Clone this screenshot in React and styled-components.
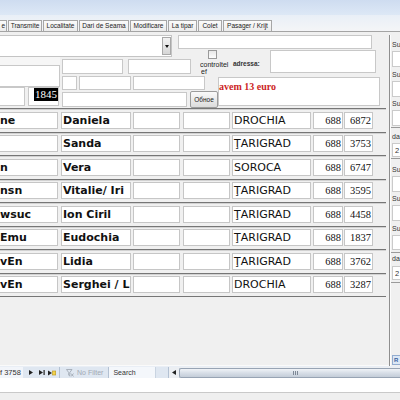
import React from 'react';
import styled, { createGlobalStyle } from 'styled-components';

const Global = createGlobalStyle`
  html, body { margin: 0; padding: 0; background: #f0f0f0; }
  body { width: 400px; height: 400px; overflow: hidden; font-family: "DejaVu Sans", sans-serif; }
`;

const Screen = styled.div`
  width: 400px; height: 400px; display: flex; flex-direction: column;
  overflow: hidden; background: #f0f0f0;
`;

const TitleBand = styled.div`
  height: 15px; flex-shrink: 0;
  background: linear-gradient(#cedcf0, #dde8f6);
`;

const TabStrip = styled.div`
  height: 17px; flex-shrink: 0; box-sizing: border-box;
  display: flex; align-items: flex-end; gap: 1px;
  background: linear-gradient(#e9eff7, #f4f5f7);
  border-bottom: 1px solid #a4a4a4;
`;

const Tab = styled.div`
  width: ${p => p.$w}px; height: 11px; box-sizing: border-box; flex-shrink: 0;
  border: 1px solid #a6a6a6; border-bottom: none;
  border-left-width: ${p => (p.$cut ? 0 : 1)}px;
  background: linear-gradient(#fbfbfb, #ececec);
  font: 6.5px/10px "Liberation Sans", sans-serif; color: #222;
  text-align: ${p => (p.$cut ? 'right' : 'center')};
  padding-right: ${p => (p.$cut ? 1 : 0)}px;
  white-space: nowrap; overflow: hidden;
`;

const Main = styled.div`
  height: 334px; flex-shrink: 0; display: flex;
`;

const FormPane = styled.div`
  width: 389px; flex-shrink: 0; display: flex; flex-direction: column;
`;

const Header = styled.div`
  height: 76px; flex-shrink: 0; box-sizing: border-box; padding-top: 3px;
  display: flex; align-items: flex-start;
`;

const LeftPart = styled.div`
  width: 178px; flex-shrink: 0; display: flex; flex-direction: column;
`;

const Combo = styled.div`
  width: 172px; height: 22px; box-sizing: border-box; background: #fff;
  border: 1px solid #c4c4c4; border-left: none;
  display: flex; justify-content: flex-end; align-items: center;
`;

const ComboBtn = styled.div`
  width: 9px; height: 18px; box-sizing: border-box;
  border: 1px solid #a9a9a9; background: linear-gradient(#f3f3f3, #d6d6d6);
  display: flex; align-items: center; justify-content: center;
`;

const Lower = styled.div`
  display: flex; align-items: flex-start;
`;

const LeftCol = styled.div`
  width: 60px; flex-shrink: 0; display: flex; flex-direction: column;
`;

const Strip = styled.div`
  height: 8px; background: #f6f6f6;
`;

const MidCol = styled.div`
  margin-left: 2px; display: flex; flex-direction: column;
`;

const FieldRow = styled.div`
  display: flex; align-items: flex-start; margin-top: ${p => p.$mt || 0}px;
`;

const Field = styled.div`
  flex-shrink: 0; box-sizing: border-box;
  width: ${p => p.$w}px; height: ${p => p.$h}px;
  margin-left: ${p => p.$ml || 0}px; margin-top: ${p => p.$mt || 0}px;
  background: #fff; border: 1px solid #c8c8c8;
  border-left-width: ${p => (p.$open ? 0 : 1)}px;
  display: flex; justify-content: flex-end; align-items: flex-start;
`;

const Selected = styled.span`
  background: #000; color: #fff; padding: 0 1px;
  font: 11px/13px "Liberation Serif", serif;
`;

const SmallButton = styled.div`
  flex-shrink: 0; width: 28px; height: 17px; margin-left: 3px; box-sizing: border-box;
  border: 1px solid #9c9c9c; border-radius: 2px;
  background: linear-gradient(#fafafa, #dcdcdc);
  font: 6.5px/15px "Liberation Sans", sans-serif; color: #222; text-align: center;
  white-space: nowrap; overflow: hidden;
`;

const RightPart = styled.div`
  width: 198px; flex-shrink: 0; display: flex; flex-direction: column;
`;

const InfoRow = styled.div`
  display: flex; align-items: flex-start; margin-top: 1px; height: 23px;
`;

const CheckCol = styled.div`
  width: 33px; margin-left: 22px; flex-shrink: 0; display: flex; flex-direction: column;
`;

const Check = styled.div`
  width: 9px; height: 9px; margin-left: 8px; box-sizing: border-box;
  border: 1px solid #9a9a9a; background: linear-gradient(#e8e8e8, #fdfdfd);
`;

const TinyText = styled.div`
  font: 7px/${p => p.$lh || 8}px "Liberation Sans", sans-serif; color: #222;
  margin-top: ${p => p.$mt || 0}px; margin-left: ${p => p.$ml || 0}px;
  height: ${p => p.$h || 'auto'}; overflow: hidden; white-space: nowrap;
`;

const AddrLabel = styled.div`
  width: 37px; flex-shrink: 0; margin-top: 10px;
  font: bold 6.5px/8px "Liberation Sans", sans-serif; color: #333;
`;

const Memo = styled.div`
  width: 162px; height: 29px; margin-left: 40px; margin-top: 4px; box-sizing: border-box;
  background: #fff; border: 1px solid #c8c8c8; padding: 3px 0 0 0;
  flex-shrink: 0;
`;

const Alert = styled.div`
  font: bold 10px/11px "Liberation Serif", serif; color: #cc1f26;
`;

const Rows = styled.div`
  width: 386px; border-top: 1px solid #767676; display: flex; flex-direction: column;
`;

const Row = styled.div`
  height: 23.5px; flex-shrink: 0; box-sizing: border-box;
  border-bottom: 1px solid #767676; box-shadow: inset 0 1px 0 #d2d2d2;
  display: flex; align-items: center;
`;

const Cell = styled.div`
  flex-shrink: 0; box-sizing: border-box;
  width: ${p => p.$w}px; height: 17px; margin-left: ${p => p.$ml || 0}px;
  background: #fff; border: 1px solid #c6c6c6;
  border-left-width: ${p => (p.$open ? 0 : 1)}px;
  padding: 0 1px; overflow: hidden; white-space: nowrap;
  color: #111;
  font-family: ${p => (p.$num ? '"Liberation Serif", serif' : '"DejaVu Sans", sans-serif')};
  font-size: ${p => (p.$num ? 10.5 : 11)}px;
  font-weight: ${p => (p.$bold ? 'bold' : 'normal')};
  line-height: 15px;
  text-align: ${p => (p.$num ? 'right' : 'left')};
  padding-left: ${p => (p.$open ? 0 : 1)}px;
`;

const Filler = styled.div`
  flex: 1; border-bottom: 1px solid #fafafa;
`;

const Divider = styled.div`
  width: 2px; flex-shrink: 0; margin-top: 3px;
  border-left: 1px solid #8e8e8e; box-sizing: border-box; background: #fcfcfc;
`;

const SidePanel = styled.div`
  flex: 1; display: flex; flex-direction: column; margin-top: 3px; overflow: hidden;
`;

const SideLabel = styled.div`
  height: 12px; margin-top: ${p => p.$mt || 0}px; flex-shrink: 0;
  font: 7px/12px "Liberation Sans", sans-serif; color: #333; white-space: nowrap; padding-left: 1px;
`;

const SideBox = styled.div`
  height: ${p => p.$h || 16}px; margin-top: ${p => p.$mt || 0}px; margin-left: 1px; flex-shrink: 0;
  box-sizing: border-box; background: #fff; border: 1px solid #cacaca; border-right: none;
  font: 7.5px/13px "Liberation Sans", sans-serif; color: #333; padding-left: 2px;
`;

const SideSep = styled.div`
  height: 1px; margin-top: ${p => p.$mt || 0}px; background: #9a9a9a; flex-shrink: 0;
`;

const RBox = styled.div`
  margin-top: auto; margin-bottom: 1px; margin-left: 1px; height: 10px; box-sizing: border-box;
  border: 1px solid #93acd0; border-right: none; background: #dbe7f5;
  font: bold 6px/8px "Liberation Sans", sans-serif; color: #3b5f9e; padding-left: 1px;
`;

const NavBar = styled.div`
  height: 12px; flex-shrink: 0; display: flex; align-items: stretch;
  background: #dfe7f1; border-top: 1px solid #e9eef5; box-sizing: border-box;
`;

const RecordBox = styled.div`
  width: 23px; flex-shrink: 0; background: #f2f5fa;
  font: 7.5px/11px "Liberation Sans", sans-serif; color: #333; white-space: nowrap; overflow: hidden;
`;

const NavIcon = styled.div`
  flex-shrink: 0; margin-left: ${p => p.$ml}px; display: flex; align-items: center;
`;

const NavSep = styled.div`
  width: 1px; flex-shrink: 0; margin-left: ${p => p.$ml || 0}px; background: #b3c1d3;
`;

const FilterText = styled.div`
  margin-left: 3px; flex-shrink: 0;
  font: 7px/11px "Liberation Sans", sans-serif; color: #a2a9b3; white-space: nowrap;
`;

const SearchBox = styled.div`
  width: 47px; flex-shrink: 0; box-sizing: border-box; background: #f4f7fb;
  border-right: 1px solid #c9d4e1; padding-left: 4px;
  font: 7px/11px "Liberation Sans", sans-serif; color: #333;
`;

const NavGap = styled.div`
  width: 12px; flex-shrink: 0;
`;

const ScrollArea = styled.div`
  flex: 1; display: flex; align-items: center; background: #eceff3;
`;

const Thumb = styled.div`
  flex: 1; height: 10px; margin-left: 3px; box-sizing: border-box;
  border: 1px solid #98a4b4; border-right: none; border-radius: 2px 0 0 2px;
  background: linear-gradient(#f0f3f7, #d7dee7 50%, #c4cdd8);
  display: flex; align-items: center; justify-content: flex-start; padding-left: 113px;
`;

const Grip = styled.div`
  width: 5px; height: 4px;
  background: repeating-linear-gradient(90deg, #7d8896 0 1px, transparent 1px 2px);
`;

const WhiteBand = styled.div`
  height: 14px; flex-shrink: 0; background: #fff;
`;

const StatusBar = styled.div`
  height: 8px; flex-shrink: 0; background: #efefef; border-top: 1px solid #c9c9c9; box-sizing: border-box;
`;

const tabs = [
  { t: 'e', w: 7, cut: true },
  { t: 'Transmite', w: 34 },
  { t: 'Localitate', w: 35 },
  { t: 'Dari de Seama', w: 50 },
  { t: 'Modificare', w: 37 },
  { t: 'La tipar', w: 29 },
  { t: 'Colet', w: 24 },
  { t: 'Pasager / Krijt', w: 49 },
];

const rows = [
  ['ne', 'Daniela', 'DROCHIA', '688', '6872'],
  ['', 'Sanda', 'ŢARIGRAD', '688', '3753'],
  ['n', 'Vera', 'SOROCA', '688', '6747'],
  ['nsn', 'Vitalie/ Iri', 'ŢARIGRAD', '688', '3595'],
  ['wsuc', 'Ion Ciril', 'ŢARIGRAD', '688', '4458'],
  ['Emu', 'Eudochia', 'ŢARIGRAD', '688', '1837'],
  ['vEn', 'Lidia', 'ŢARIGRAD', '688', '3762'],
  ['vEn', 'Serghei / L', 'DROCHIA', '688', '3287'],
];

const side = [
  { k: 'label', t: 'Su', mt: 4 },
  { k: 'box', h: 16 },
  { k: 'label', t: 'Su', mt: 2 },
  { k: 'box', h: 16 },
  { k: 'label', t: 'Su', mt: 1 },
  { k: 'box', h: 16 },
  { k: 'sep', mt: 1 },
  { k: 'label', t: 'da', mt: 3 },
  { k: 'box', h: 14, t: '2' },
  { k: 'sep', mt: 1 },
  { k: 'label', t: 'Su', mt: 5 },
  { k: 'box', h: 16 },
  { k: 'label', t: 'Su', mt: 1 },
  { k: 'box', h: 16 },
  { k: 'label', t: 'Su', mt: 2 },
  { k: 'box', h: 15 },
  { k: 'sep', mt: 2 },
  { k: 'label', t: 'da', mt: 0 },
  { k: 'box', h: 14, t: '2', mt: 1 },
  { k: 'sep', mt: 2 },
];

const Tri = ({ left }) => (
  <svg width="4" height="5" viewBox="0 0 4 5">
    <polygon points={left ? '4,0 0,2.5 4,5' : '0,0 4,2.5 0,5'} fill="#222" />
  </svg>
);

export default function App() {
  return (
    <>
      <Global />
      <Screen>
        <TitleBand />
        <TabStrip>
          {tabs.map(t => (
            <Tab key={t.t} $w={t.w} $cut={t.cut}>{t.t}</Tab>
          ))}
        </TabStrip>
        <Main>
          <FormPane>
            <Header>
              <LeftPart>
                <Combo>
                  <ComboBtn>
                    <svg width="4" height="3" viewBox="0 0 4 3"><polygon points="0,0 4,0 2,3" fill="#111" /></svg>
                  </ComboBtn>
                </Combo>
                <Lower>
                  <LeftCol>
                    <Strip />
                    <Field $w={60} $h={22} $open />
                    <FieldRow>
                      <Field $w={25} $h={19} $open />
                      <Field $w={31} $h={19} $ml={3}><Selected>1845</Selected></Field>
                    </FieldRow>
                  </LeftCol>
                  <MidCol>
                    <FieldRow $mt={2}>
                      <Field $w={61} $h={15} />
                      <Field $w={63} $h={15} $ml={5} />
                    </FieldRow>
                    <FieldRow $mt={2}>
                      <Field $w={15} $h={14} />
                      <Field $w={52} $h={14} $ml={2} />
                      <Field $w={72} $h={14} $ml={2} />
                    </FieldRow>
                    <FieldRow $mt={1}>
                      <Field $w={125} $h={15} $mt={1} />
                      <SmallButton>Обное</SmallButton>
                    </FieldRow>
                  </MidCol>
                </Lower>
              </LeftPart>
              <RightPart>
                <Field $w={194} $h={14} />
                <InfoRow>
                  <CheckCol>
                    <Check />
                    <TinyText $mt={2}>controltel</TinyText>
                    <TinyText $ml={1} $lh={6} $h="5px">ef</TinyText>
                  </CheckCol>
                  <AddrLabel>adressa:</AddrLabel>
                  <Field $w={106} $h={23} />
                </InfoRow>
                <Memo>
                  <Alert>avem 13 euro</Alert>
                </Memo>
              </RightPart>
            </Header>
            <Rows>
              {rows.map((r, i) => (
                <Row key={i}>
                  <Cell $w={58} $open $bold>{r[0]}</Cell>
                  <Cell $w={70} $ml={3} $bold>{r[1]}</Cell>
                  <Cell $w={47} $ml={2} />
                  <Cell $w={47} $ml={3} />
                  <Cell $w={79} $ml={2}>{r[2]}</Cell>
                  <Cell $w={30} $ml={2} $num>{r[3]}</Cell>
                  <Cell $w={29} $ml={1} $num>{r[4]}</Cell>
                </Row>
              ))}
            </Rows>
            <Filler />
          </FormPane>
          <Divider />
          <SidePanel>
            {side.map((s, i) =>
              s.k === 'label' ? (
                <SideLabel key={i} $mt={s.mt}>{s.t}</SideLabel>
              ) : s.k === 'box' ? (
                <SideBox key={i} $h={s.h} $mt={s.mt}>{s.t || ''}</SideBox>
              ) : (
                <SideSep key={i} $mt={s.mt} />
              )
            )}
            <RBox>R</RBox>
          </SidePanel>
        </Main>
        <NavBar>
          <RecordBox>f 3758</RecordBox>
          <NavIcon $ml={6}><Tri /></NavIcon>
          <NavIcon $ml={6}>
            <svg width="6" height="5" viewBox="0 0 6 5"><polygon points="0,0 4,2.5 0,5" fill="#222" /><rect x="4.5" y="0" width="1.2" height="5" fill="#222" /></svg>
          </NavIcon>
          <NavIcon $ml={3}>
            <svg width="8" height="6" viewBox="0 0 8 6"><polygon points="0,0.5 4,3 0,5.5" fill="#222" /><rect x="4.5" y="1" width="3.2" height="4" fill="#f3d24a" stroke="#b8961c" strokeWidth="0.6" /></svg>
          </NavIcon>
          <NavSep $ml={3} />
          <NavIcon $ml={6}>
            <svg width="8" height="8" viewBox="0 0 8 8"><path d="M0.5 0.5 H6 L3.8 3.5 V7 L2.7 6.2 V3.5 Z" fill="none" stroke="#9aa3ae" strokeWidth="0.8" /><path d="M5 4.5 L7.5 7.5 M7.5 4.5 L5 7.5" stroke="#9aa3ae" strokeWidth="0.8" /></svg>
          </NavIcon>
          <FilterText>No Filter</FilterText>
          <NavSep $ml={5} />
          <SearchBox>Search</SearchBox>
          <NavGap />
          <NavSep />
          <ScrollArea>
            <NavIcon $ml={3}><Tri left /></NavIcon>
            <Thumb><Grip /></Thumb>
          </ScrollArea>
        </NavBar>
        <WhiteBand />
        <StatusBar />
      </Screen>
    </>
  );
}
